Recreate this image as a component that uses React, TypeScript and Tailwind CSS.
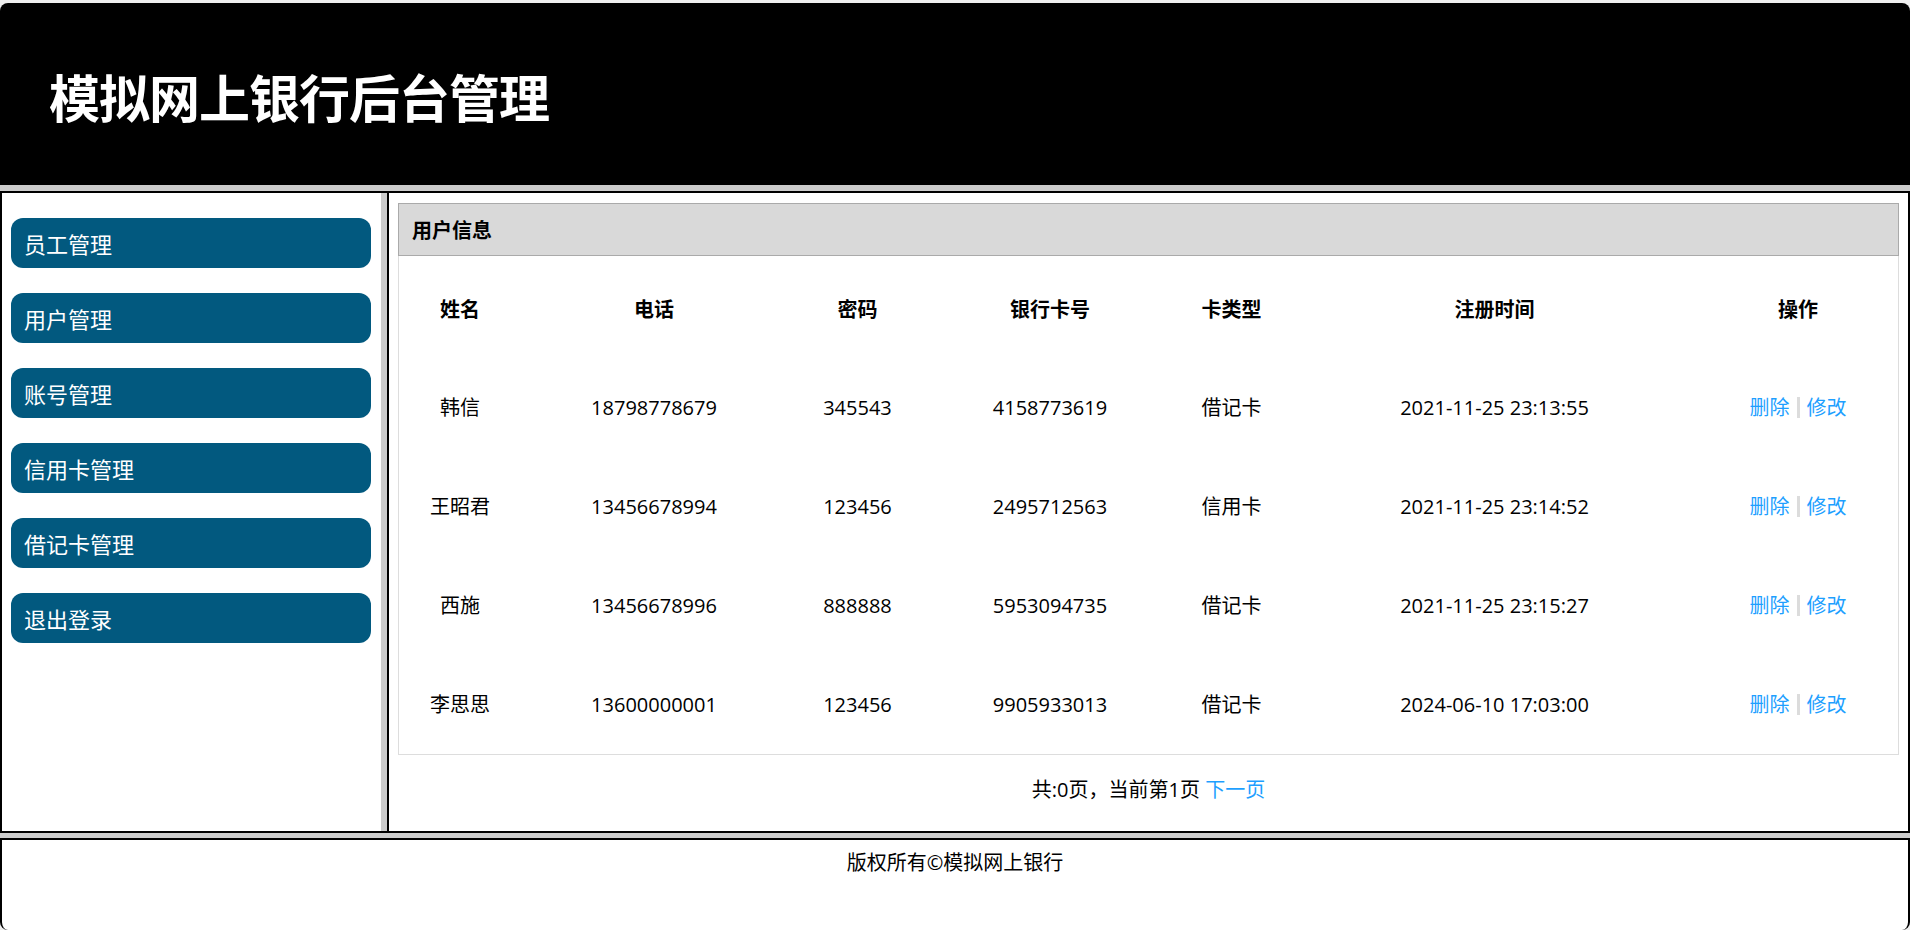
import React from "react";

const font = { fontFamily: '"Open Sans", "Noto Sans CJK SC", "Noto Sans", sans-serif' };
const cjk = { fontFamily: '"Noto Sans CJK SC", "Noto Sans", sans-serif' };

const menu = ["员工管理", "用户管理", "账号管理", "信用卡管理", "借记卡管理", "退出登录"];

const rows = [
  ["韩信", "18798778679", "345543", "4158773619", "借记卡", "2021-11-25 23:13:55"],
  ["王昭君", "13456678994", "123456", "2495712563", "信用卡", "2021-11-25 23:14:52"],
  ["西施", "13456678996", "888888", "5953094735", "借记卡", "2021-11-25 23:15:27"],
  ["李思思", "13600000001", "123456", "9905933013", "借记卡", "2024-06-10 17:03:00"],
];

const heads = ["姓名", "电话", "密码", "银行卡号", "卡类型", "注册时间", "操作"];

const gridCols = "grid grid-cols-[122px_266px_141px_244px_119px_407px_1fr]";

export default function App() {
  return (
    <div className="w-[1910px] h-[930px] bg-[#efefef] pt-[3px] flex flex-col text-black" style={font}>
      <header className="h-[182px] bg-black rounded-t-[8px] flex items-center pl-[49px] pt-[5px]">
        <h1 className="text-white text-[51px] font-bold tracking-[-1px] leading-none" style={cjk}>
          模拟网上银行后台管理
        </h1>
      </header>
      <div className="h-[6px] bg-[#cccccc]" />
      <div className="h-[642px] border-y-2 border-black flex bg-[#cccccc]">
        <aside className="w-[381px] bg-white border-l-2 border-black pt-[25px] pl-[9px] flex flex-col gap-[25px]">
          {menu.map((m) => (
            <div
              key={m}
              className="w-[360px] h-[50px] rounded-[12px] bg-[#02597f] text-white text-[22px] flex items-center pl-[13px] leading-none"
              style={cjk}
            >
              {m}
            </div>
          ))}
        </aside>
        <div className="w-[6px]" />
        <main className="flex-1 bg-white border-x-2 border-black px-[9px] pt-[10px] flex flex-col">
          <div className="h-[53px] bg-[#d9d9d9] border border-[#aaaaaa] flex items-center pl-[13px]">
            <span className="text-[20px] font-bold leading-none" style={cjk}>
              用户信息
            </span>
          </div>
          <div className="h-[499px] border-x border-b border-[#dddddd] pt-[3px]">
            <div className={`${gridCols} h-[99px] items-center text-center text-[20px] font-bold`} style={cjk}>
              {heads.map((h) => (
                <div key={h}>{h}</div>
              ))}
            </div>
            {rows.map((r) => (
              <div key={r[0]} className={`${gridCols} h-[99px] items-center text-center text-[20px]`}>
                {r.map((c, i) => (
                  <div key={i}>{c}</div>
                ))}
                <div className="flex items-center justify-center text-[#1e9fff]">
                  <span>删除</span>
                  <span className="inline-block w-[3px] h-[21px] bg-[#dcdcdc] mx-[7px]" />
                  <span>修改</span>
                </div>
              </div>
            ))}
          </div>
          <div className="pt-[22px] text-center text-[20px] leading-[26px]">
            共:0页，当前第1页 <span className="text-[#1e9fff]">下一页</span>
          </div>
        </main>
      </div>
      <div className="h-[5px] bg-[#cccccc]" />
      <footer className="flex-1 bg-white border-x-2 border-t-2 border-black rounded-b-[8px] text-center text-[20px] leading-[26px] pt-[10px]">
        版权所有©模拟网上银行
      </footer>
    </div>
  );
}
